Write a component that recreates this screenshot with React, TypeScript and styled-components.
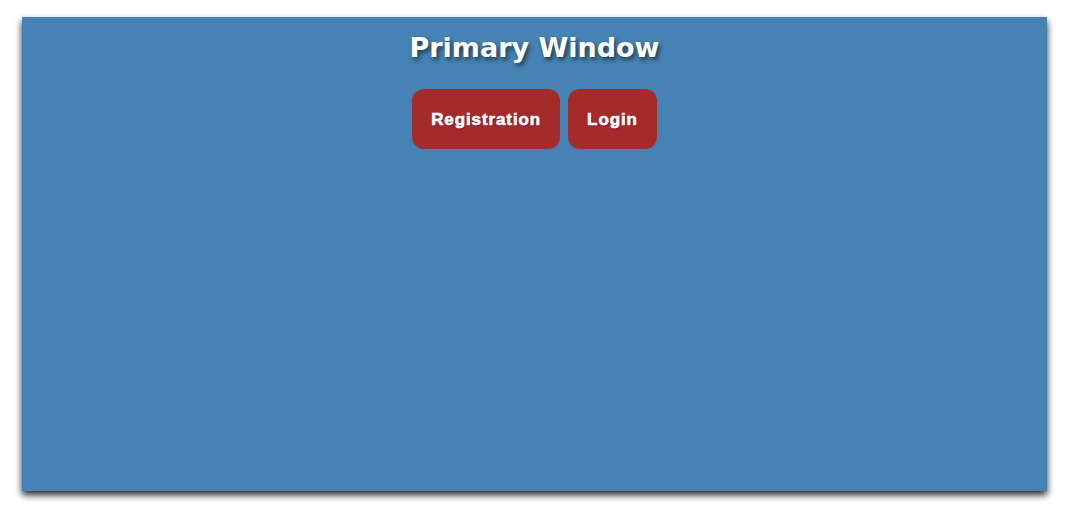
import React from "react";
import styled, { createGlobalStyle } from "styled-components";

const Global = createGlobalStyle`
  html, body { margin: 0; padding: 0; background: #fff; }
  body { font-family: "DejaVu Sans", Verdana, sans-serif; }
`;

const Page = styled.div`
  padding: 17px 22px 28px 22px;
`;

const Panel = styled.div`
  height: 474px;
  background: #4682b4;
  box-shadow: 0 4px 7px rgba(0, 0, 0, 0.85);
  display: flex;
  flex-direction: column;
  align-items: center;
`;

const Title = styled.h1`
  margin: 14px 0 0 0;
  font-family: "DejaVu Sans", Verdana, sans-serif;
  font-weight: bold;
  font-size: 27px;
  line-height: 34px;
  color: #fff;
  text-shadow: 2px 3px 4px rgba(0, 0, 0, 0.55);
`;

const Row = styled.div`
  display: flex;
  gap: 8px;
  margin-top: 24px;
`;

const Button = styled.button`
  height: 60px;
  padding: 0 19px;
  border: none;
  border-radius: 12px;
  background: #a52a2a;
  color: #fff;
  font-family: "Liberation Sans", Arial, sans-serif;
  font-weight: 900;
  font-size: 17px;
  letter-spacing: 0.9px;
  line-height: 20px;
  padding-top: 2px;
  -webkit-text-stroke: 0.6px #fff;
  text-shadow: 1px 1px 1px rgba(60, 0, 80, 0.5);
  cursor: pointer;
`;

export default function App() {
  return (
    <>
      <Global />
      <Page>
        <Panel>
          <Title>Primary Window</Title>
          <Row>
            <Button>Registration</Button>
            <Button>Login</Button>
          </Row>
        </Panel>
      </Page>
    </>
  );
}
